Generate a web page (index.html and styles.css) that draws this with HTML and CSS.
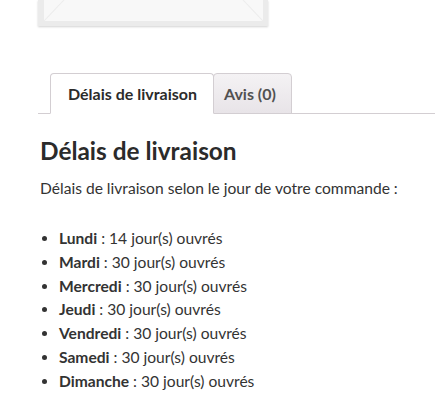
FILE: index.html
```html
<!DOCTYPE html>
<html lang="fr">
<head>
<meta charset="utf-8">
<link rel="stylesheet" href="styles.css">
</head>
<body>
<div class="page">
  <div class="gallery">
    <div class="frame">
      <svg class="placeholder" viewBox="0 0 219 20" preserveAspectRatio="none" width="219" height="20">
        <rect width="219" height="20" fill="#f8f8f8"/>
        <line x1="0" y1="20" x2="20" y2="0" stroke="#ececec" stroke-width="1"/>
        <line x1="219" y1="20" x2="199" y2="0" stroke="#ececec" stroke-width="1"/>
      </svg>
    </div>
  </div>

  <div class="tabs-wrap">
    <ul class="tabs">
      <li class="tab active"><a>Délais de livraison</a></li>
      <li class="tab"><a>Avis (0)</a></li>
    </ul>
  </div>

  <div class="panel">
    <h2 class="title">Délais de livraison</h2>
    <p class="intro">Délais de livraison selon le jour de votre commande :</p>
    <ul class="days">
      <li><strong>Lundi</strong> : 14 jour(s) ouvrés</li>
      <li><strong>Mardi</strong> : 30 jour(s) ouvrés</li>
      <li><strong>Mercredi</strong> : 30 jour(s) ouvrés</li>
      <li><strong>Jeudi</strong> : 30 jour(s) ouvrés</li>
      <li><strong>Vendredi</strong> : 30 jour(s) ouvrés</li>
      <li><strong>Samedi</strong> : 30 jour(s) ouvrés</li>
      <li><strong>Dimanche</strong> : 30 jour(s) ouvrés</li>
    </ul>
  </div>
</div>
</body>
</html>
```

FILE: styles.css
```css
html, body {
  margin: 0;
  padding: 0;
  background: #fff;
}
body {
  font-family: Lato, "Open Sans", sans-serif;
  color: #333;
}
.page {
  padding-left: 38px;
  overflow: hidden;
  height: 401px;
}
.gallery {
  width: 230px;
}
.frame {
  box-sizing: border-box;
  width: 230px;
  height: 26px;
  border: 5px solid #ebebeb;
  border-top: 0;
  border-left-width: 6px;
  box-shadow: 0 1px 2px rgba(0, 0, 0, 0.18);
  background: #f8f8f8;
  display: flex;
}
.placeholder {
  display: block;
  width: 100%;
  height: 100%;
}
.tabs-wrap {
  margin-top: 47px;
  border-bottom: 1px solid #d3ced2;
  margin-right: -40px;
}
.tabs {
  list-style: none;
  margin: 0 0 -1px 12px;
  padding: 0;
  display: flex;
}
.tab {
  box-sizing: border-box;
  height: 41px;
  border: 1px solid #d3ced2;
  border-radius: 4px 4px 0 0;
  background: linear-gradient(#f4f2f4, #e8e4e8);
  display: flex;
  align-items: center;
  font-size: 16px;
  font-weight: 700;
  color: #515151;
}
.tab + .tab {
  margin-left: -1px;
}
.tab a {
  padding: 0 15px 0 10px;
}
.tab.active {
  background: #fff;
  border-bottom-color: #fff;
  color: #2b2b2b;
  position: relative;
  z-index: 1;
}
.tab.active a {
  padding: 0 16px 0 17px;
}
.panel {
  padding-left: 2px;
}
.title {
  margin: 22px 0 0;
  font-size: 24.4px;
  font-weight: 700;
  line-height: 30px;
  color: #2b2b2b;
}
.intro {
  margin: 10px 0 0;
  font-size: 15.6px;
  line-height: 24px;
}
.days {
  margin: 27px 0 0;
  padding-left: 19px;
  font-size: 15.6px;
  line-height: 23.8px;
}
.days strong {
  font-weight: 700;
}
```
